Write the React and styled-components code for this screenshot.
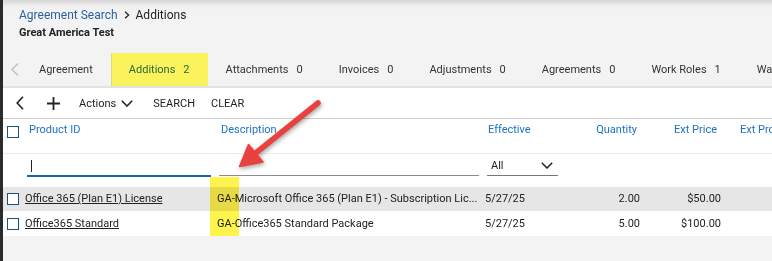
import React from "react";
import styled, { createGlobalStyle } from "styled-components";

const GlobalStyle = createGlobalStyle`
  html, body {
    margin: 0;
    padding: 0;
    background: #f3f3f3;
  }
  body {
    font-family: Roboto, "Liberation Sans", Arial, sans-serif;
    color: #222;
  }
  #root {
    width: 772px;
    height: 261px;
    overflow: hidden;
  }
`;

const tabs = [
  { label: "Agreement" },
  { label: "Additions", count: 2, active: true },
  { label: "Attachments", count: 0 },
  { label: "Invoices", count: 0 },
  { label: "Adjustments", count: 0 },
  { label: "Agreements", count: 0 },
  { label: "Work Roles", count: 1 },
  { label: "Warranties", count: 0 },
];

const rows = [
  {
    id: "Office 365 (Plan E1) License",
    desc: "GA-Microsoft Office 365 (Plan E1) - Subscription Lic...",
    effective: "5/27/25",
    qty: "2.00",
    price: "$50.00",
  },
  {
    id: "Office365 Standard",
    desc: "GA-Office365 Standard Package",
    effective: "5/27/25",
    qty: "5.00",
    price: "$100.00",
  },
];

export default function App() {
  return (
    <Page>
      <GlobalStyle />
      <LeftRail />
      <Main>
        <PageHeader>
          <Breadcrumb>
            <CrumbLink>Agreement Search</CrumbLink>
            <svg width="6" height="8" viewBox="0 0 6 8">
              <path d="M1 0.8 L4.6 4 L1 7.2" fill="none" stroke="#222" strokeWidth="1.3" />
            </svg>
            <span>Additions</span>
          </Breadcrumb>
          <Title>Great America Test</Title>
        </PageHeader>

        <TabBar>
          <TabArrow>
            <svg width="8" height="13" viewBox="0 0 8 13">
              <path d="M7 0.5 L1 6.5 L7 12.5" fill="none" stroke="#bcbcbc" strokeWidth="1.3" />
            </svg>
          </TabArrow>
          {tabs.map((t) => (
            <Tab key={t.label} $active={t.active}>
              {t.label}
              {t.count !== undefined && <Count>{t.count}</Count>}
            </Tab>
          ))}
        </TabBar>

        <Content>
          <Toolbar>
            <ToolButton $gap={0}>
              <svg width="8" height="14" viewBox="0 0 8 14">
                <path d="M7 0.8 L1.2 7 L7 13.2" fill="none" stroke="#222" strokeWidth="1.6" />
              </svg>
            </ToolButton>
            <ToolButton $gap={23}>
              <svg width="13" height="13" viewBox="0 0 13 13">
                <path d="M6.5 0 V13 M0 6.5 H13" fill="none" stroke="#222" strokeWidth="1.8" />
              </svg>
            </ToolButton>
            <ToolButton $gap={19}>
              Actions
              <svg width="12" height="7" viewBox="0 0 12 7">
                <path d="M0.8 0.8 L6 6 L11.2 0.8" fill="none" stroke="#222" strokeWidth="1.6" />
              </svg>
            </ToolButton>
            <ToolButton $gap={20}>SEARCH</ToolButton>
            <ToolButton $gap={16}>CLEAR</ToolButton>
          </Toolbar>

          <HeaderRow>
            <CheckCell $top={7}>
              <Checkbox />
            </CheckCell>
            <HeadCell>Product ID</HeadCell>
            <HeadCell>Description</HeadCell>
            <HeadCell $left={1}>Effective</HeadCell>
            <HeadCell $align="right" $right={8}>Quantity</HeadCell>
            <HeadCell $align="right" $right={8}>Ext Price</HeadCell>
            <HeadCell $left={15}>Ext Prorated</HeadCell>
          </HeaderRow>

          <FilterRow>
            <span />
            <FilterInput $focused $width={184}>
              <Caret />
            </FilterInput>
            <FilterInput $width={260} />
            <FilterSelect>
              All
              <svg width="12" height="7" viewBox="0 0 12 7">
                <path d="M0.8 0.8 L6 6 L11.2 0.8" fill="none" stroke="#222" strokeWidth="1.5" />
              </svg>
            </FilterSelect>
          </FilterRow>

          {rows.map((r, i) => (
            <DataRow key={r.id} $shade={i === 0} $height={i === 0 ? 24 : 25}>
              <CheckCell>
                <Checkbox />
              </CheckCell>
              <Cell>
                <RowLink>{r.id}</RowLink>
              </Cell>
              <Cell>{r.desc}</Cell>
              <Cell $left={-2}>{r.effective}</Cell>
              <Cell $align="right" $right={5}>{r.qty}</Cell>
              <Cell $align="right" $right={4}>{r.price}</Cell>
              <Cell />
            </DataRow>
          ))}
        </Content>
      </Main>

      <Highlighter />
      <ArrowLayer width="772" height="261" viewBox="0 0 772 261">
        <line x1="318" y1="103" x2="257" y2="152" stroke="#e9413e" strokeWidth="5.5" strokeLinecap="round" />
        <polygon points="239.5,166.5 263,162 248.5,144.5" fill="#e9413e" stroke="#e9413e" strokeWidth="1.5" strokeLinejoin="round" />
      </ArrowLayer>
    </Page>
  );
}

const Page = styled.div`
  position: relative;
  display: flex;
  width: 772px;
  height: 261px;
  overflow: hidden;
  background: #f3f3f3;
`;

const LeftRail = styled.div`
  width: 3px;
  flex-shrink: 0;
  background: #2b2b2b;
`;

const Main = styled.div`
  flex: 1;
  min-width: 0;
  display: flex;
  flex-direction: column;
  background: linear-gradient(#d6d6d6 0, #f0f0f0 6px, #f3f3f3 12px, #f3f3f3 100%);
`;

const PageHeader = styled.div`
  padding: 7px 0 0 16px;
`;

const Breadcrumb = styled.div`
  display: flex;
  align-items: center;
  gap: 6px;
  font-size: 12px;
  line-height: 16px;
  color: #222;
`;

const CrumbLink = styled.span`
  color: #2a62a0;
`;

const Title = styled.div`
  margin-top: 3px;
  font-size: 11px;
  line-height: 14px;
  font-weight: 700;
  color: #222;
`;

const TabBar = styled.div`
  margin-top: 13px;
  height: 33px;
  display: flex;
  align-items: stretch;
  border-bottom: 2px solid #e2e2e2;
  white-space: nowrap;
`;

const TabArrow = styled.div`
  width: 18px;
  flex-shrink: 0;
  display: flex;
  align-items: center;
  justify-content: flex-end;
  padding-right: 2px;
  box-sizing: border-box;
`;

const Tab = styled.div`
  display: flex;
  align-items: center;
  flex-shrink: 0;
  padding: 0 18px;
  font-size: 11px;
  color: ${(p) => (p.$active ? "#28693c" : "#333")};
  background: ${(p) => (p.$active ? "#fbf35b" : "transparent")};
  box-shadow: ${(p) => (p.$active ? "inset 1px 0 0 #e4dc70" : "none")};
`;

const Count = styled.span`
  margin-left: 8px;
`;

const Content = styled.div`
  background: #fff;
`;

const Toolbar = styled.div`
  height: 30px;
  display: flex;
  align-items: center;
  padding-left: 13px;
  border-bottom: 1px solid #cdcdcd;
`;

const ToolButton = styled.button`
  display: flex;
  align-items: center;
  gap: 5px;
  margin-left: ${(p) => p.$gap}px;
  padding: 0;
  border: 0;
  background: none;
  font-family: inherit;
  font-size: 11px;
  color: #222;
`;

const gridColumns = "22px 192px 270px 100px 58px 80px 1fr";

const HeaderRow = styled.div`
  display: grid;
  grid-template-columns: ${gridColumns};
  align-items: start;
  height: 34px;
  border-bottom: 1px solid #ececec;
`;

const HeadCell = styled.div`
  padding: 4px ${(p) => p.$right || 0}px 0 ${(p) => (p.$left !== undefined ? p.$left : 4)}px;
  font-size: 11px;
  line-height: 14px;
  color: #1b72c8;
  text-align: ${(p) => p.$align || "left"};
  white-space: nowrap;
  overflow: hidden;
`;

const CheckCell = styled.div`
  padding: ${(p) => p.$top || 0}px 0 0 4px;
  display: flex;
`;

const Checkbox = styled.span`
  display: block;
  width: 12px;
  height: 12px;
  box-sizing: border-box;
  border: 1.5px solid #1f4f7d;
  background: #fff;
`;

const FilterRow = styled.div`
  display: grid;
  grid-template-columns: ${gridColumns};
  align-items: start;
  height: 33px;
`;

const FilterInput = styled.div`
  margin-left: 2px;
  width: ${(p) => p.$width}px;
  height: ${(p) => (p.$focused ? 23 : 22)}px;
  box-sizing: border-box;
  padding-left: 4px;
  border-bottom: ${(p) => (p.$focused ? "2px solid #1565c0" : "1px solid #8c8c8c")};
`;

const Caret = styled.span`
  display: block;
  width: 1px;
  height: 12px;
  margin-top: 6px;
  background: #222;
`;

const FilterSelect = styled.div`
  width: 71px;
  height: 22px;
  box-sizing: border-box;
  padding: 2px 5px 0 4px;
  display: flex;
  align-items: center;
  justify-content: space-between;
  border-bottom: 1px solid #777;
  font-size: 11px;
  color: #222;
`;

const DataRow = styled.div`
  display: grid;
  grid-template-columns: ${gridColumns};
  align-items: center;
  height: ${(p) => p.$height}px;
  background: ${(p) => (p.$shade ? "#e6e6e6" : "#fff")};
`;

const Cell = styled.div`
  padding: 0 ${(p) => p.$right || 0}px 0 0;
  margin-left: ${(p) => p.$left || 0}px;
  font-size: 11px;
  line-height: 14px;
  color: #222;
  text-align: ${(p) => p.$align || "left"};
  white-space: nowrap;
  overflow: hidden;
`;

const RowLink = styled.span`
  text-decoration: underline;
  color: #222;
`;

const Highlighter = styled.div`
  position: absolute;
  left: 210px;
  top: 177px;
  width: 29px;
  height: 59px;
  background: #fff34d;
  mix-blend-mode: multiply;
  pointer-events: none;
`;

const ArrowLayer = styled.svg`
  position: absolute;
  left: 0;
  top: 0;
  pointer-events: none;
  filter: drop-shadow(1px 2px 2px rgba(0, 0, 0, 0.35));
`;
